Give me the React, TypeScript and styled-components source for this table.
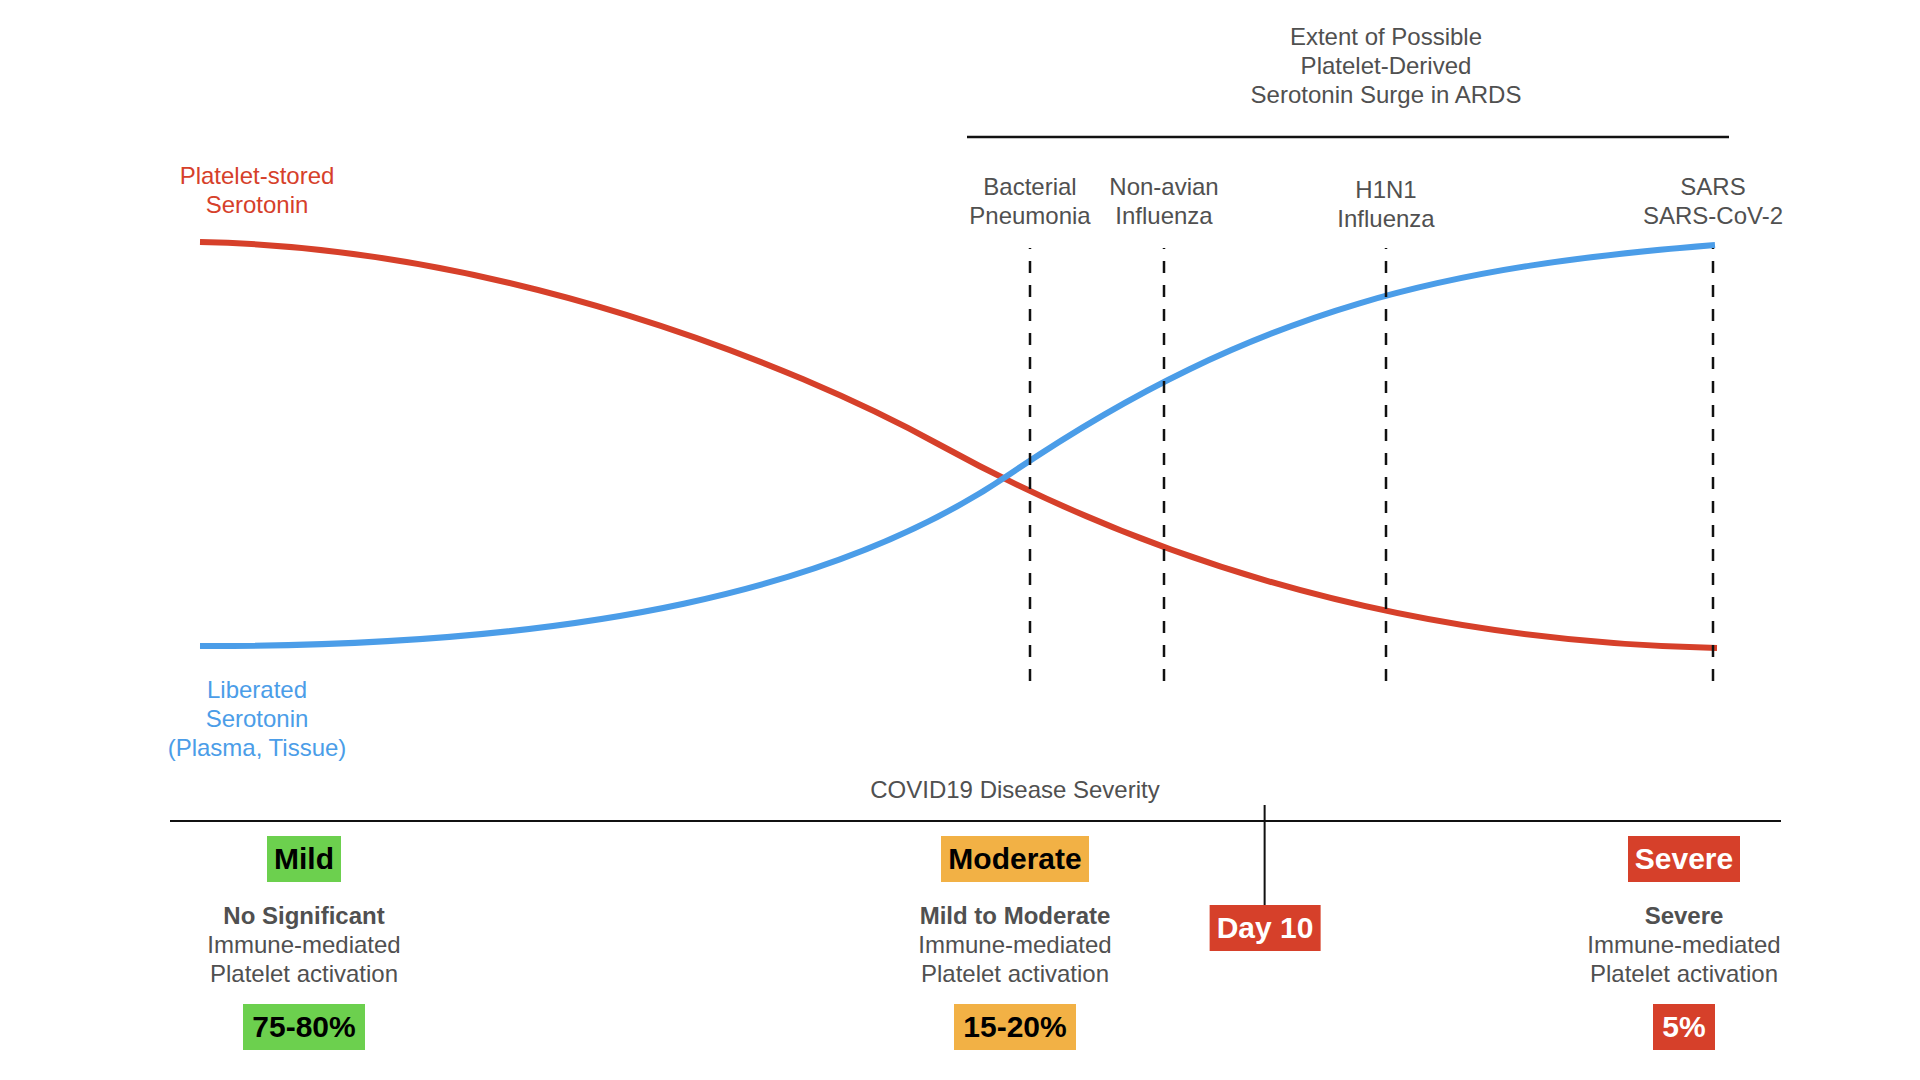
import React from 'react';
import styled, { createGlobalStyle } from 'styled-components';

const INK = '#111';
const TEXT = '#505050';
const RED = '#D6402A';
const BLUE = '#4B9DE8';
const GREEN = '#6CD04E';
const ORANGE = '#F2B145';

// the three severity columns share the same track widths (centers at 304, 1015, 1684)
const TRACKS = '268px 1154px 184px';

// two cubic segments each, joined at the inflection with a shared tangent
const plateletCurve = 'M200,242 C500,248 790,362.5 940,445 C1160,566 1417,642 1717,648';
const liberatedCurve = 'M200,646 C580,647 840,589.6 1010,474 C1260,304 1455,265.8 1715,245';

const guideLines = [1030, 1164, 1386, 1713];

type Tone = 'ink' | 'red' | 'blue';

const annotations: { x: number; y: number; tone: Tone; lines: string[] }[] = [
  { x: 1386, y: 22, tone: 'ink', lines: ['Extent of Possible', 'Platelet-Derived', 'Serotonin Surge in ARDS'] },
  { x: 1030, y: 172, tone: 'ink', lines: ['Bacterial', 'Pneumonia'] },
  { x: 1164, y: 172, tone: 'ink', lines: ['Non-avian', 'Influenza'] },
  { x: 1386, y: 175, tone: 'ink', lines: ['H1N1', 'Influenza'] },
  { x: 1713, y: 172, tone: 'ink', lines: ['SARS', 'SARS-CoV-2'] },
  { x: 257, y: 161, tone: 'red', lines: ['Platelet-stored', 'Serotonin'] },
  { x: 257, y: 675, tone: 'blue', lines: ['Liberated', 'Serotonin', '(Plasma, Tissue)'] },
];

const tiers = [
  { label: 'Mild', bg: GREEN, fg: '#000', lead: 'No Significant', share: '75-80%' },
  { label: 'Moderate', bg: ORANGE, fg: '#000', lead: 'Mild to Moderate', share: '15-20%' },
  { label: 'Severe', bg: RED, fg: '#fff', lead: 'Severe', share: '5%' },
];

const App: React.FC = () => {
  return (
    <>
      <GlobalStyle />
      <Page>
        <ChartCanvas>
          <ChartSvg width="1920" height="775" viewBox="0 0 1920 775">
            <line x1={967} y1={137} x2={1729} y2={137} stroke={INK} strokeWidth={2.5} />
            <path d={plateletCurve} fill="none" stroke={RED} strokeWidth={6} />
            <path d={liberatedCurve} fill="none" stroke={BLUE} strokeWidth={6} />
            {guideLines.map(x => (
              <line
                key={x}
                x1={x}
                y1={248}
                x2={x}
                y2={682}
                stroke={INK}
                strokeWidth={2.5}
                strokeDasharray="12 12"
                strokeDashoffset={11}
              />
            ))}
          </ChartSvg>

          {annotations.map((a, i) => (
            <Annotation key={i} $x={a.x} $y={a.y} $tone={a.tone}>
              {a.lines.map(line => (
                <div key={line}>{line}</div>
              ))}
            </Annotation>
          ))}
        </ChartCanvas>

        <Severity>
          <Columns>
            <AxisTitle>COVID19 Disease Severity</AxisTitle>
          </Columns>
          <Axis />
          <TierGrid>
            {tiers.map(t => (
              <Tier key={t.label}>
                <Badge $bg={t.bg} $fg={t.fg}>{t.label}</Badge>
                <Description>
                  <strong>{t.lead}</strong>
                  <div>Immune-mediated</div>
                  <div>Platelet activation</div>
                </Description>
                <ShareBadge $bg={t.bg} $fg={t.fg}>{t.share}</ShareBadge>
              </Tier>
            ))}
          </TierGrid>

          <DayMarker>
            <Tick />
            <Badge $bg={RED} $fg="#fff">Day 10</Badge>
          </DayMarker>
        </Severity>
      </Page>
    </>
  );
};

const GlobalStyle = createGlobalStyle`
  html, body {
    margin: 0;
    padding: 0;
    background: #fff;
  }

  body {
    font-family: "Liberation Sans", Arial, Helvetica, sans-serif;
  }
`;

const Page = styled.div`
  width: 1920px;
  height: 1080px;
  overflow: hidden;
  background: #fff;
`;

const ChartCanvas = styled.div`
  position: relative;
  height: 775px;
`;

const ChartSvg = styled.svg`
  position: absolute;
  top: 0;
  left: 0;
  display: block;
`;

const toneColor: Record<Tone, string> = {
  ink: TEXT,
  red: RED,
  blue: BLUE,
};

const Annotation = styled.div<{ $x: number; $y: number; $tone: Tone }>`
  position: absolute;
  left: ${p => p.$x}px;
  top: ${p => p.$y}px;
  transform: translateX(-50%);
  text-align: center;
  white-space: nowrap;
  font-size: 24px;
  line-height: 29px;
  color: ${p => toneColor[p.$tone]};
`;

const Severity = styled.div`
  position: relative;
  margin-left: 170px;
  width: 1611px;
`;

const Columns = styled.div`
  display: grid;
  grid-template-columns: ${TRACKS};
`;

const AxisTitle = styled.div`
  grid-column: 2;
  justify-self: center;
  white-space: nowrap;
  font-size: 24px;
  line-height: 29px;
  color: ${TEXT};
`;

const Axis = styled.div`
  margin-top: 16px;
  border-top: 2px solid ${INK};
`;

const TierGrid = styled(Columns)`
  padding-top: 14px;
`;

const Tier = styled.div`
  display: flex;
  flex-direction: column;
  align-items: center;
`;

const Badge = styled.span<{ $bg: string; $fg: string }>`
  display: block;
  height: 46px;
  padding: 0 7px;
  line-height: 46px;
  font-size: 30px;
  font-weight: 700;
  white-space: nowrap;
  background: ${p => p.$bg};
  color: ${p => p.$fg};
`;

const ShareBadge = styled(Badge)`
  margin-top: 16px;
  padding: 0 9px;
`;

const Description = styled.div`
  margin-top: 19px;
  text-align: center;
  white-space: nowrap;
  font-size: 24px;
  line-height: 29px;
  color: ${TEXT};

  strong {
    display: block;
    font-weight: 700;
  }
`;

const DayMarker = styled.div`
  position: absolute;
  left: 1095px;
  top: 30px;
  transform: translateX(-50%);
  display: flex;
  flex-direction: column;
  align-items: center;
`;

const Tick = styled.div`
  width: 2px;
  height: 100px;
  background: ${INK};
`;

export default App;
